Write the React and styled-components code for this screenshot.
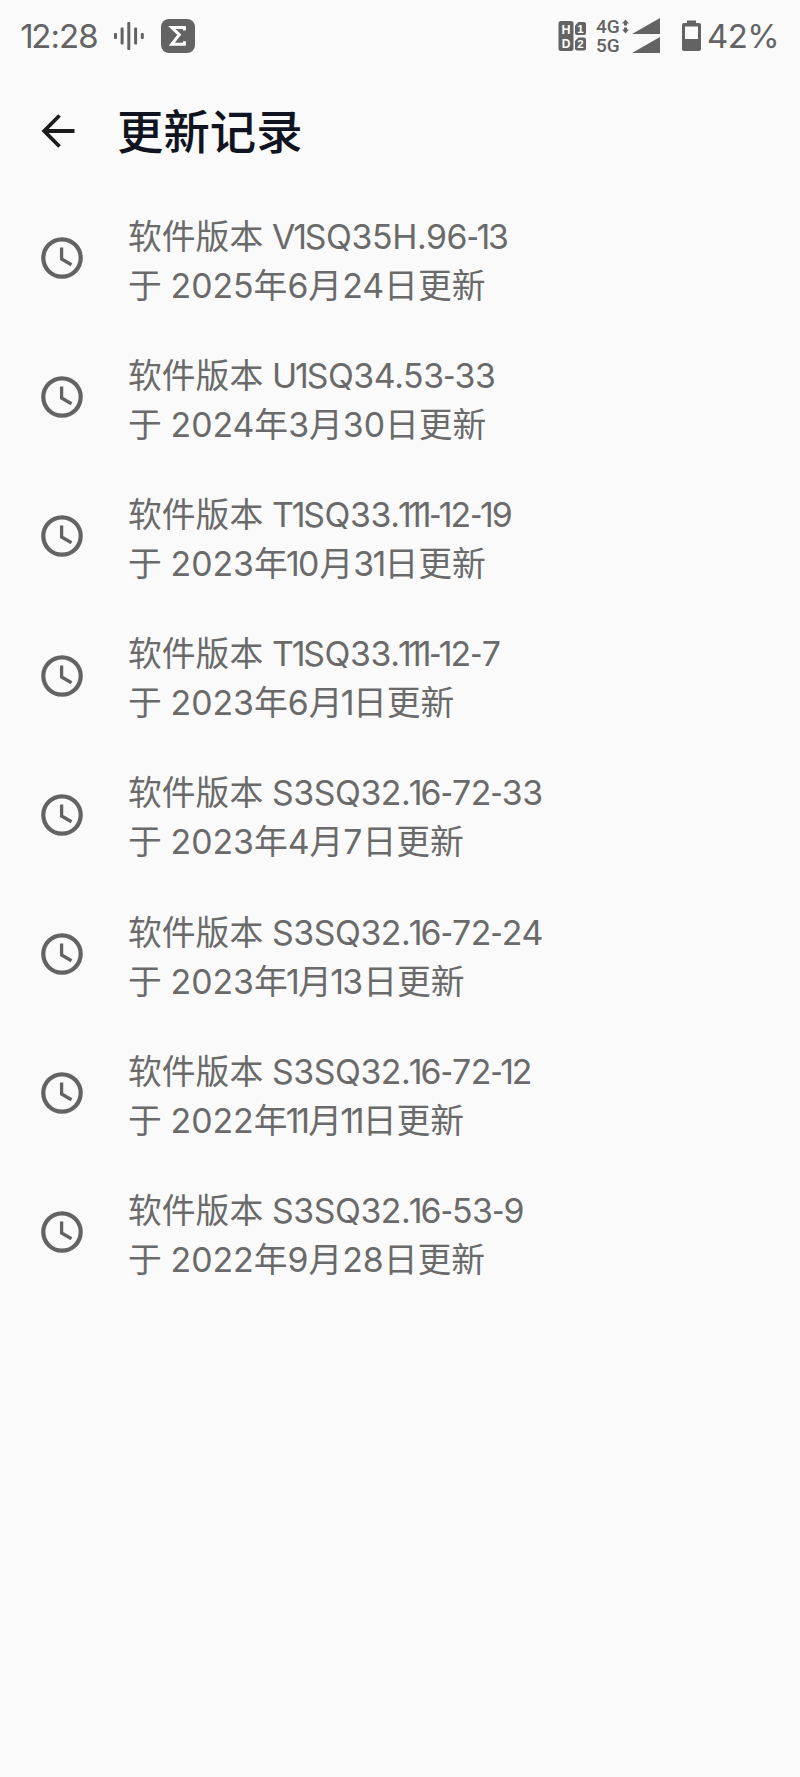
import styled, { createGlobalStyle } from "styled-components"

const updates = [
  { version: "V1SQ35H.96-13", date: "2025年6月24日" },
  { version: "U1SQ34.53-33", date: "2024年3月30日" },
  { version: "T1SQ33.111-12-19", date: "2023年10月31日" },
  { version: "T1SQ33.111-12-7", date: "2023年6月1日" },
  { version: "S3SQ32.16-72-33", date: "2023年4月7日" },
  { version: "S3SQ32.16-72-24", date: "2023年1月13日" },
  { version: "S3SQ32.16-72-12", date: "2022年11月11日" },
  { version: "S3SQ32.16-53-9", date: "2022年9月28日" },
]

// the digit one and the hyphen are set tighter than the rest
function Tight({ children }) {
  return children.split(/([1-])/).map((part, i) => {
    if (part === "1") return <One key={i}>1</One>
    if (part === "-") return <Hyphen key={i}>-</Hyphen>
    return part
  })
}

function VoiceIcon() {
  return (
    <svg width="32" height="30" viewBox="0 0 32 30" fill="#636363">
      <rect x="1" y="12" width="3" height="6" rx="1" />
      <rect x="7.6" y="6.5" width="3" height="17" rx="1" />
      <rect x="14.3" y="1" width="3" height="28" rx="1" />
      <rect x="21.1" y="6.5" width="3" height="17" rx="1" />
      <rect x="27.8" y="12" width="3" height="6" rx="1" />
    </svg>
  )
}

function SigmaIcon() {
  return (
    <svg width="34" height="34" viewBox="0 0 34 34">
      <rect width="34" height="34" rx="8" fill="#636363" />
      <path d="M23.4 11.5V8.6H10.8L18.3 15.6L10.8 25.2H23.4V22.3" fill="none" stroke="#fff" strokeWidth="3" />
    </svg>
  )
}

function SimIcon() {
  return (
    <svg width="28" height="30" viewBox="0 0 28 30" fontFamily="Liberation Sans" fontWeight="700" textAnchor="middle">
      <rect x="0.5" y="0" width="15" height="30" rx="2.5" fill="#636363" />
      <path d="M17 4.5L20.5 1H26Q28 1 28 3V12Q28 14 26 14H19Q17 14 17 12Z" fill="#636363" />
      <path d="M17 20L20.5 16.5H26Q28 16.5 28 18.5V27.5Q28 29.5 26 29.5H19Q17 29.5 17 27.5Z" fill="#636363" />
      <text x="8" y="13" fontSize="12.5" fill="#fff">H</text>
      <text x="8" y="26.5" fontSize="12" fill="#fff">D</text>
      <text x="22.5" y="12" fontSize="11.5" fill="#fff">1</text>
      <text x="22.5" y="27.2" fontSize="11.5" fill="#fff">2</text>
    </svg>
  )
}

function SignalIcon() {
  return (
    <svg width="38" height="36" viewBox="0 0 38 36" fill="#636363">
      <path d="M3.5 1.5L7 5.5H5V7.5H2V5.5H0Z" />
      <path d="M3.5 15.5L0 11.5H2V9.5H5V11.5H7Z" />
      <path d="M38 0V16H10Z" />
      <path d="M38 19V35H10Z" />
    </svg>
  )
}

function BatteryIcon() {
  return (
    <svg width="19" height="32" viewBox="0 0 19 32">
      <path d="M5 0.5H14V3H17Q19 3 19 5V29Q19 31 17 31H2Q0 31 0 29V5Q0 3 2 3H5Z" fill="#636363" />
      <rect x="3" y="6.5" width="13" height="12.5" fill="#fafafa" />
    </svg>
  )
}

function BackIcon() {
  return (
    <svg width="34" height="34" viewBox="0 0 34 34" fill="none" stroke="#1c1c1c" strokeWidth="3.8">
      <path d="M33.5 17H3.5M18.5 1.5L3.2 17L18.5 32.5" />
    </svg>
  )
}

function ClockIcon() {
  return (
    <svg width="42" height="42" viewBox="0 0 42 42" fill="none" stroke="#636363">
      <circle cx="21" cy="21" r="18.7" strokeWidth="4.2" />
      <path d="M20.6 10.5V22L30.5 27.7" strokeWidth="3.3" />
    </svg>
  )
}

export default function App() {
  return (
    <Screen>
      <GlobalStyle />
      <StatusBar>
        <Time><Tight>12:28</Tight></Time>
        <VoiceIcon />
        <SigmaIcon />
        <StatusRight>
          <SimIcon />
          <Network>
            <span>4G</span>
            <span>5G</span>
          </Network>
          <SignalIcon />
          <Battery>
            <BatteryIcon />
            <span>42%</span>
          </Battery>
        </StatusRight>
      </StatusBar>

      <Header>
        <BackButton aria-label="返回">
          <BackIcon />
        </BackButton>
        <h1>更新记录</h1>
      </Header>

      <UpdateList>
        {updates.map((update) => (
          <UpdateItem key={update.version}>
            <ClockIcon />
            <div>
              <Line>软件版本 <Version><Tight>{update.version}</Tight></Version></Line>
              <Line>于 <Tight>{update.date}</Tight>更新</Line>
            </div>
          </UpdateItem>
        ))}
      </UpdateList>
    </Screen>
  )
}

const GlobalStyle = createGlobalStyle`
  body {
    margin: 0;
    background-color: #fafafa;
  }
`
const Screen = styled.main`
  min-height: 1777px;
  background-color: #fafafa;
  color: #636363;
  font-family: Inter, "Noto Sans CJK SC", sans-serif;
`
const StatusBar = styled.header`
  display: flex;
  align-items: center;
  height: 72px;
  padding: 0 21px 0 22px;
  font-size: 33px;
  line-height: 40px;

  svg {
    flex-shrink: 0;
  }
`
const Time = styled.span`
  width: 78px;
  margin-right: 13px;
  letter-spacing: -0.9px;
  white-space: nowrap;

  & + svg {
    margin-right: 16px;
  }
`
const StatusRight = styled.div`
  display: flex;
  align-items: center;
  margin-left: auto;
`
const Network = styled.div`
  display: flex;
  flex-direction: column;
  width: 26px;
  margin-left: 10px;
  font-family: Roboto, sans-serif;
  font-size: 19px;
  font-weight: 500;
  line-height: 19px;
`
const Battery = styled.div`
  display: flex;
  align-items: center;
  margin-left: 22px;
  gap: 6px;

  span {
    letter-spacing: -0.6px;
  }
`
const Header = styled.header`
  display: flex;
  align-items: center;
  height: 119px;
  padding-left: 41px;

  svg {
    margin-bottom: 1px;
  }

  h1 {
    margin: 1px 0 0 42px;
    color: #101420;
    font-size: 46.4px;
    font-weight: 500;
    line-height: 60px;
  }
`
const BackButton = styled.button`
  display: flex;
  padding: 0;
  border: none;
  background: none;
`
const UpdateList = styled.ul`
  margin: 0;
  padding: 0;
  list-style: none;
`
const UpdateItem = styled.li`
  display: flex;
  align-items: center;
  gap: 45px;
  height: 139.2px;
  padding-left: 41px;

  svg {
    margin-bottom: 5px;
  }
`
const Line = styled.p`
  margin: 0;
  color: #6a6a6a;
  font-size: 33.8px;
  line-height: 49px;
  white-space: nowrap;
  word-spacing: -0.8px;
`
const Version = styled.span`
  letter-spacing: -0.4px;
`
const One = styled.span`
  margin: 0 -1.7px;
`
const Hyphen = styled.span`
  margin: 0 -0.6px;
  font-family: Lato, sans-serif;
`
